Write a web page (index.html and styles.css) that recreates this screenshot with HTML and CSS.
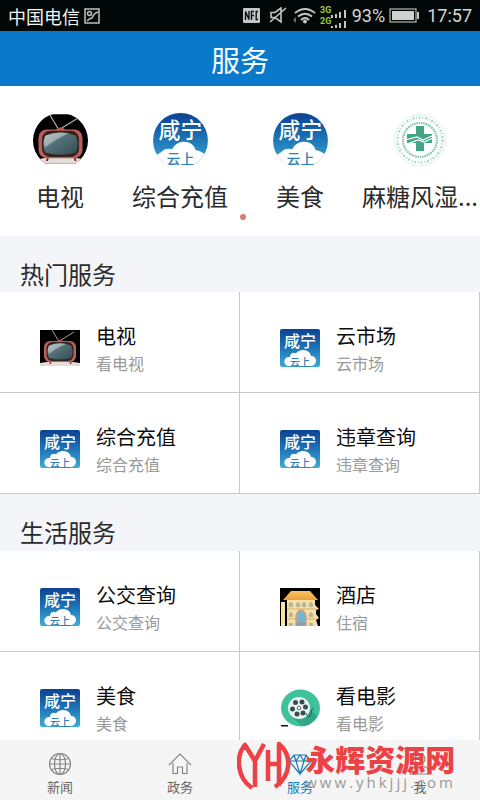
FILE: index.html
```html
<!DOCTYPE html>
<html lang="zh-CN">
<head>
<meta charset="utf-8">
<meta name="viewport" content="width=device-width, initial-scale=1">
<title>服务</title>
<link rel="stylesheet" href="styles.css">
</head>
<body>
<svg class="sprite" aria-hidden="true">
  <defs>
    <linearGradient id="sky" x1="0" y1="0" x2="0" y2="1">
      <stop offset="0" stop-color="#0d4292"/><stop offset=".5" stop-color="#1d74b6"/><stop offset="1" stop-color="#3fabd5"/>
    </linearGradient>
    <linearGradient id="screen" x1="0" y1="0" x2="1" y2="1">
      <stop offset="0" stop-color="#a9babd"/><stop offset=".4" stop-color="#547179"/><stop offset="1" stop-color="#304b52"/>
    </linearGradient>
    <linearGradient id="roof" x1="0" y1="0" x2="0" y2="1">
      <stop offset="0" stop-color="#f9c565"/><stop offset="1" stop-color="#eda03a"/>
    </linearGradient>
  </defs>
  <symbol id="xianning" viewBox="0 0 40 38">
    <rect width="40" height="38" rx="2" fill="url(#sky)"/>
    <path d="M8 37C2 35 4 27 10 28C10 24 14 23 16 24.500C19 19 30 20 31 27C37 27 38 35 32 37Z" fill="#fff"/>
    <text x="20" y="18" class="logo-name">咸宁</text>
    <text x="20" y="37" class="logo-sub">云上</text>
  </symbol>
  <symbol id="xianning-wide" viewBox="0 0 40 38">
    <rect width="40" height="38" fill="url(#sky)"/>
    <path d="M0 38V32Q4 30 6 28.500Q9 25 14 26.500C17 19 29 19 31 27Q37 28 40 33V38Z" fill="#fff"/>
    <text x="20" y="18" class="logo-name">咸宁</text>
    <text x="20" y="37" class="logo-sub">云上</text>
  </symbol>
  <symbol id="tv" viewBox="0 0 40 36">
    <rect width="40" height="36" fill="#000"/>
    <path d="M0 33Q20 29 40 33V36H0Z" fill="#e4dcda"/>
    <path d="M12 0L18 10M34 2L21 10" stroke="#b9aaa6" stroke-width=".9"/>
    <path d="M16 12Q20 7 24 12Z" fill="#bd5952"/>
    <path d="M11 31L10 34M30 31L31 34" stroke="#8a332f" stroke-width="1.500"/>
    <rect x="4" y="11" width="32" height="21" rx="6" fill="#b9605a"/>
    <rect x="6.500" y="12" width="27" height="19" rx="6" fill="#38211f"/>
    <path d="M9 15.500Q20 11 31 15.500Q34 22 31 28Q20 31 9 28Q6 22 9 15.500Z" fill="url(#screen)"/>
    <path d="M9 16Q18 12 26 14Q18 17 9 24Q7 20 9 16Z" fill="#cbd6d6" opacity=".55"/>
  </symbol>
</svg>

<div class="status">
  <span class="carrier">中国电信</span>
  <svg class="shot" viewBox="0 0 16 16" fill="none" stroke="#bfc3c2" stroke-width="1.500"><rect x="1" y="1" width="14" height="14"/><circle cx="5.500" cy="5.500" r="2"/><path d="M3 13Q6 10 8 10Q10 5 14 4"/></svg>
  <svg class="nfc" viewBox="0 0 17 15"><rect width="17" height="15" rx="1" fill="#c3c7c6"/><path d="M2.500 12V3.500L6 11.500V3M8.500 12V3.500H11M8.500 7.500H11M15 3.500H13.200V11.500H15" fill="none" stroke="#111" stroke-width="1.400"/></svg>
  <svg class="mute" viewBox="0 0 18 17" fill="none" stroke="#c3c7c6" stroke-width="1.600"><path d="M2 5.500H6L12 1V15L6 10.500H2ZM1 15L17 1"/></svg>
  <svg class="wifi" viewBox="0 0 24 17" fill="none" stroke="#c3c7c6" stroke-width="2"><path d="M3 6Q13-2 23 6M6 9.500Q13 4 20 9.500M9 13Q13 9 17 13"/><circle cx="13" cy="14.500" r="1" /><path d="M1 13L4 10V16ZM6 10V16" stroke="none" fill="#68706f"/></svg>
  <svg class="signal" viewBox="0 0 28 24"><text x="0" y="9" class="gen">3G</text><text x="0" y="20" class="gen">2G</text><path d="M11 11h2v3h-2zM15 10h2v4h-2zM19 8h2v6h-2zM24 6h2v8h-2zM11 22h2v2h-2zM15 21h2v3h-2zM19 19h2v5h-2zM24 17h2v7h-2z" fill="#c3c7c6"/></svg>
  <span class="reading">93%</span>
  <svg class="battery" viewBox="0 0 30 15"><rect x="1" y="1" width="26" height="13" fill="none" stroke="#b3b7b5" stroke-width="1.200"/><rect x="3" y="3" width="22" height="9" fill="#cfd3d0"/><rect x="28" y="4" width="2" height="7" fill="#c3c7c6"/></svg>
  <time class="reading">17:57</time>
</div>

<header class="bar"><h1>服务</h1></header>

<main>
  <nav class="featured" aria-label="推荐服务">
    <a href="#"><svg class="round" viewBox="0 0 55 55"><use href="#tv" x="0" y="1" width="55" height="50"/></svg><span>电视</span></a>
    <a href="#"><svg class="round" viewBox="0 0 55 55"><use href="#xianning-wide" width="55" height="52"/></svg><span>综合充值</span></a>
    <a href="#"><svg class="round" viewBox="0 0 55 55"><use href="#xianning-wide" width="55" height="52"/></svg><span>美食</span></a>
    <a href="#"><svg class="round" viewBox="0 0 55 55" fill="none">
      <circle cx="27" cy="27" r="25.500" stroke="#c4e7dc" stroke-width=".6"/>
      <circle cx="27" cy="27" r="22.500" stroke="#a3d6c7" stroke-width="2.200" stroke-dasharray="2 1.500 1 2"/>
      <circle cx="27" cy="27" r="17" stroke="#7fc5af" stroke-width="2.200" stroke-dasharray="1.500 .8"/>
      <path d="M23 13h8v25h-8zM14 21h25v9H14z" fill="#42a583"/>
      <path d="M12 27L24 24L30 27L41 22M14 31L25 27L31 29L40 25" stroke="#fff" stroke-width="1.200"/>
    </svg><span>麻糖风湿...</span></a>
    <i class="page-dot"></i>
  </nav>

  <section>
    <h2>热门服务</h2>
    <div class="grid">
      <a href="#"><svg class="pic"><use href="#tv"/></svg><span><b>电视</b><small>看电视</small></span></a>
      <a href="#"><svg class="pic"><use href="#xianning"/></svg><span><b>云市场</b><small>云市场</small></span></a>
      <a href="#"><svg class="pic"><use href="#xianning"/></svg><span><b>综合充值</b><small>综合充值</small></span></a>
      <a href="#"><svg class="pic"><use href="#xianning"/></svg><span><b>违章查询</b><small>违章查询</small></span></a>
    </div>
  </section>

  <section>
    <h2>生活服务</h2>
    <div class="grid">
      <a href="#"><svg class="pic"><use href="#xianning"/></svg><span><b>公交查询</b><small>公交查询</small></span></a>
      <a href="#"><svg class="pic" viewBox="0 0 40 38">
        <rect width="40" height="38" fill="#000"/>
        <path d="M1 14H5V38H1ZM7 12H35V17L39 21L36 22V26L39 30L36 32L38 38H7Z" fill="#f7e3a8"/>
        <path d="M11 3H30L38 12H3Z" fill="url(#roof)"/>
        <path d="M7 21H37M7 31H37" stroke="#dcaa70"/>
        <path d="M9 19v-3q2-4 4 0v3zM16 19v-3q2-4 4 0v3zM22 19v-3q2-4 4 0v3zM29 19v-3q2-4 4 0v3zM9 29v-3q2-4 4 0v3zM29 29v-3q2-4 4 0v3zM9 38v-3h4v3zM29 38v-3h4v3z" fill="#a9b6a5" stroke="#d8c391" stroke-width=".6"/>
        <path d="M16 38V27Q21 17 26 27V38Z" fill="#79b4cf" stroke="#d79a83" stroke-width="1.500"/><path d="M17 34h8v4h-8z" fill="#8b9dab"/>
      </svg><span><b>酒店</b><small>住宿</small></span></a>
      <a href="#"><svg class="pic"><use href="#xianning"/></svg><span><b>美食</b><small>美食</small></span></a>
      <a href="#"><svg class="pic" viewBox="0 0 40 38">
        <ellipse cx="20.500" cy="19" rx="19.500" ry="18.500" fill="#3fc19b"/>
        <path d="M11 27L22 37Q32 37 37 27L30 20Z" fill="#2fa787"/>
        <circle cx="19" cy="19" r="11" fill="#eef3f1"/>
        <g fill="#344e56"><circle cx="15.500" cy="13.500" r="2.500"/><circle cx="22" cy="13" r="2.500"/><circle cx="25.500" cy="18" r="2.500"/><circle cx="23" cy="24" r="2.500"/><circle cx="17" cy="25" r="2.500"/><circle cx="12.500" cy="20" r="2.500"/></g>
        <circle cx="19" cy="19" r="1.800" fill="none" stroke="#344e56" stroke-width=".8"/>
        <path d="M26 24Q29 31 31 25Q31 20 34 19" fill="none" stroke="#285f59"/><path d="M1 36h7v1.500H1z" fill="#111"/>
      </svg><span><b>看电影</b><small>看电影</small></span></a>
    </div>
  </section>
</main>

<nav class="tabs" aria-label="主导航">
  <a href="#"><svg viewBox="0 0 24 24"><circle cx="12" cy="12" r="10.500"/><ellipse cx="12" cy="12" rx="5.500" ry="10.500"/><path d="M12 1.500V22.500M1.500 12H22.500M3.500 6.500Q12 9 20.500 6.500M3.500 17.500Q12 15 20.500 17.500"/></svg>新闻</a>
  <a href="#"><svg viewBox="0 0 24 24"><path d="M1 13L12 2L23 13M5 11V21.500H9.500V15H14.500V21.500H19V11"/></svg>政务</a>
  <a href="#" class="on" aria-current="page"><svg viewBox="0 0 24 24"><path d="M6 3H18L23 9L12 22L1 9ZM1 9H23M6 3L8 9L12 22L16 9L18 3M8 9L12 3L16 9"/></svg>服务</a>
  <a href="#"><svg viewBox="0 0 24 24"><circle cx="12" cy="7" r="5"/><path d="M2 22Q3 14 12 14Q21 14 22 22Z"/></svg>我</a>
</nav>

<div class="mark">
  <svg viewBox="0 0 54 50" fill="none" stroke="#ec4246" stroke-width="4.500" stroke-linejoin="round"><path d="M15 47C-1 36-1 14 8 4L18 20L27 3M18 19V46M31 9V40M31 23H42M42 45V3C55 14 55 34 38 46"/></svg>
  <div class="mark-text"><strong>永辉资源网</strong><span>www.yhkjjj.com</span></div>
</div>
</body>
</html>
```
FILE: styles.css
```css
* {
  box-sizing: border-box;
}

body {
  display: flex;
  flex-direction: column;
  height: 100vh;
  margin: 0;
  overflow: hidden;
  background: #fff;
  color: #2b2b2d;
  font-family: "Noto Sans CJK SC", sans-serif;
}

a {
  color: inherit;
  text-decoration: none;
}

.sprite {
  position: absolute;
  width: 0;
  height: 0;
}

.logo-name,
.logo-sub {
  fill: #fff;
  font-size: 16px;
  font-weight: 500;
  text-anchor: middle;
}

.logo-sub {
  fill: #2b80b5;
  font-size: 10px;
}

.status {
  display: flex;
  flex: none;
  align-items: center;
  gap: 4px;
  height: 31px;
  padding: 0 8px;
  background: #020807;
  color: #d3d7d6;
}

.carrier {
  color: #f2f4f3;
  font-size: 18px;
  line-height: 28px;
}

.reading {
  font-family: Roboto, sans-serif;
  font-size: 18px;
  line-height: 24px;
}

.status time {
  margin-left: 4px;
}

.shot {
  width: 16px;
  height: 16px;
}

.nfc {
  width: 17px;
  height: 15px;
  margin-left: auto;
}

.mute {
  width: 20px;
  height: 17px;
  margin-left: 4px;
}

.wifi {
  width: 24px;
  height: 17px;
}

.signal {
  width: 28px;
  height: 24px;
}

.gen {
  fill: #9acb3b;
  font: bold 9px Roboto, sans-serif;
}

.battery {
  width: 30px;
  height: 15px;
}

.bar {
  flex: none;
  background: #0b79cb;
  color: #f3fdff;
  text-align: center;
}

h1 {
  margin: 0;
  padding-top: 1px;
  font-size: 29px;
  font-weight: 400;
  line-height: 54px;
}

main {
  flex: 1;
  min-height: 0;
  overflow: hidden;
}

.featured {
  position: relative;
  display: grid;
  grid-template-columns: repeat(4, 1fr);
  height: 150px;
  padding-top: 27px;
}

.featured a {
  display: flex;
  flex-direction: column;
  align-items: center;
  gap: 12px;
  font-size: 24px;
  line-height: 32px;
  white-space: nowrap;
}

.round {
  width: 55px;
  height: 55px;
  border-radius: 50%;
}

.page-dot {
  position: absolute;
  bottom: 16px;
  left: 50%;
  width: 6px;
  height: 6px;
  border-radius: 50%;
  background: #dd7b70;
}

h2 {
  margin: 0;
  padding: 22px 20px 2px;
  background: #f4f5f9;
  font-size: 24px;
  font-weight: 400;
  line-height: 32px;
}

.grid {
  display: grid;
  grid-template-columns: 1fr 1fr;
}

section + section h2 {
  padding-bottom: 3px;
}

.grid a {
  display: flex;
  align-items: center;
  gap: 16px;
  height: 101px;
  padding: 12px 0 0 40px;
  border-right: 1px solid #c9c9cb;
  border-bottom: 1px solid #c9c9cb;
}

.grid span {
  padding-top: 2px;
}

.pic {
  width: 40px;
  height: 38px;
}

.grid b,
.grid small {
  display: block;
  color: #0c0c0c;
  font-size: 20px;
  font-weight: 400;
  line-height: 28px;
}

.grid small {
  color: #999;
  font-size: 16px;
  line-height: 26px;
}

.tabs {
  display: grid;
  flex: none;
  grid-template-columns: repeat(4, 1fr);
  height: 60px;
  background: #f5f5f5;
}

.tabs a {
  display: flex;
  flex-direction: column;
  align-items: center;
  padding-top: 12px;
  color: #666;
  font-size: 13px;
  line-height: 22px;
}

.tabs svg {
  width: 24px;
  height: 24px;
  fill: none;
  stroke: #858585;
  stroke-width: 1.2;
}

.tabs .on {
  color: #1b78b8;
}

.tabs .on svg {
  stroke: #1b78b8;
}

.mark {
  position: absolute;
  right: 24px;
  bottom: 9px;
  display: flex;
  gap: 14px;
  align-items: center;
  pointer-events: none;
}

.mark > svg {
  width: 54px;
  height: 50px;
}

.mark-text strong,
.mark-text span {
  display: block;
  color: #ec4246;
  font-size: 30px;
  font-weight: 900;
  line-height: 32px;
}

.mark-text span {
  color: #999;
  font-family: "Open Sans", sans-serif;
  font-size: 15px;
  font-weight: 400;
  letter-spacing: 3px;
  line-height: 16px;
}
```
